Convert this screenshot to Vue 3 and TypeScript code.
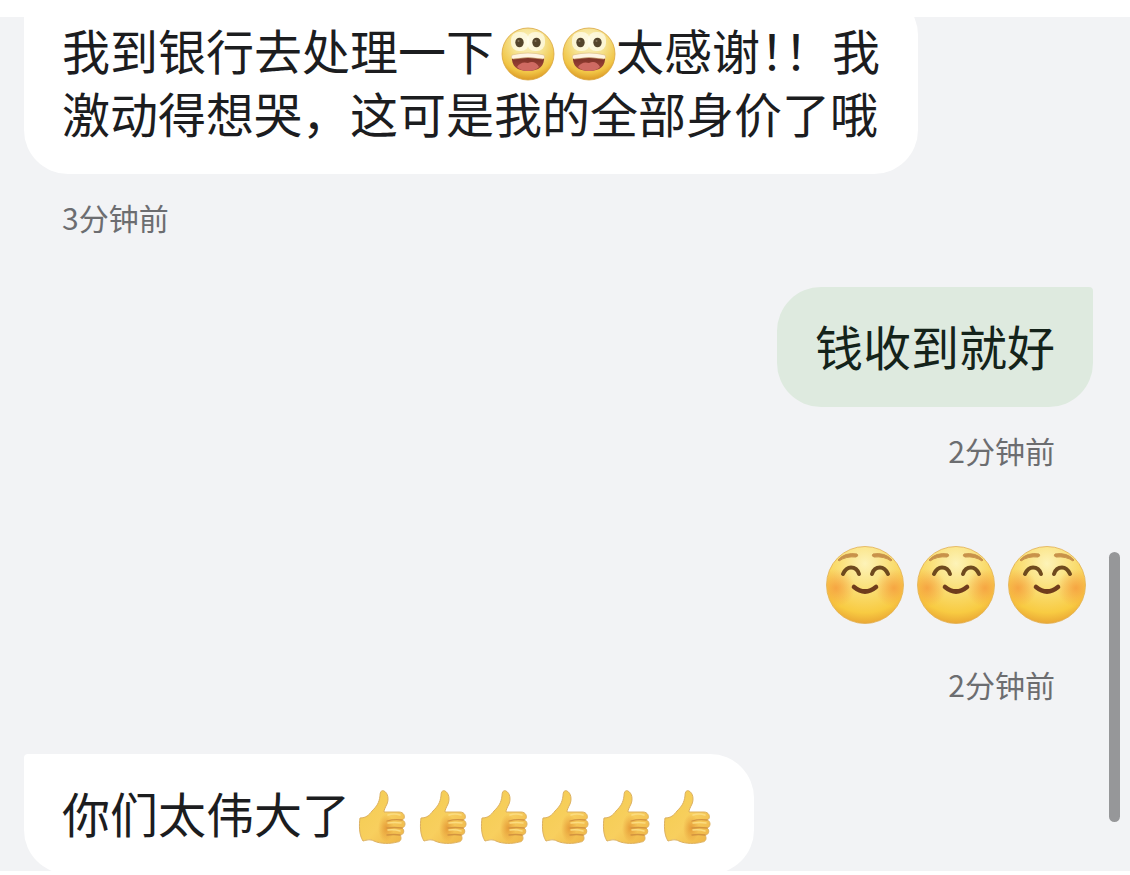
<script setup lang="ts">
type Emoji = 'grin' | 'smile' | 'thumb'
type Part = { text?: string; half?: string; emoji?: Emoji }
type Message = {
  id: number
  mine: boolean
  large?: boolean
  lines: Part[][]
  time?: string
}

const messages: Message[] = [
  {
    id: 1,
    mine: false,
    lines: [
      [
        { text: '我到银行去处理一下' },
        { emoji: 'grin' },
        { emoji: 'grin' },
        { text: '太感谢' },
        { half: '！' },
        { text: '！我' },
      ],
      [{ text: '激动得想哭，这可是我的全部身价了哦' }],
    ],
    time: '3分钟前',
  },
  { id: 2, mine: true, lines: [[{ text: '钱收到就好' }]], time: '2分钟前' },
  {
    id: 3,
    mine: true,
    large: true,
    lines: [[{ emoji: 'smile' }, { emoji: 'smile' }, { emoji: 'smile' }]],
    time: '2分钟前',
  },
  {
    id: 4,
    mine: false,
    lines: [
      [
        { text: '你们太伟大了' },
        ...Array.from({ length: 6 }, (): Part => ({ emoji: 'thumb' })),
      ],
    ],
  },
]
</script>

<template>
  <div class="page">
    <svg class="defs" aria-hidden="true">
      <defs>
        <radialGradient id="grin-face" cx="50%" cy="28%" r="72%">
          <stop offset="0" stop-color="#fbf3c8" />
          <stop offset="0.45" stop-color="#f5e08a" />
          <stop offset="0.8" stop-color="#f1c545" />
          <stop offset="1" stop-color="#dc9a26" />
        </radialGradient>
        <linearGradient id="grin-mouth" x1="0" y1="0" x2="0" y2="1">
          <stop offset="0" stop-color="#6e2a20" />
          <stop offset="1" stop-color="#a8483c" />
        </linearGradient>
        <radialGradient id="smile-face" cx="50%" cy="22%" r="80%">
          <stop offset="0" stop-color="#fdf3b8" />
          <stop offset="0.4" stop-color="#fae07a" />
          <stop offset="0.8" stop-color="#f8cb42" />
          <stop offset="1" stop-color="#e8a232" />
        </radialGradient>
        <radialGradient id="smile-cheek">
          <stop offset="0" stop-color="#f59a3c" stop-opacity="0.8" />
          <stop offset="1" stop-color="#f59a3c" stop-opacity="0" />
        </radialGradient>
        <clipPath id="smile-clip"><circle cx="39" cy="39" r="38" /></clipPath>
        <linearGradient id="thumb-skin" x1="0" y1="0" x2="1" y2="1">
          <stop offset="0" stop-color="#f3cc50" />
          <stop offset="0.55" stop-color="#f8cf5e" />
          <stop offset="1" stop-color="#eeb345" />
        </linearGradient>
        <radialGradient id="thumb-shade">
          <stop offset="0" stop-color="#e08c2c" stop-opacity="0.7" />
          <stop offset="1" stop-color="#e08c2c" stop-opacity="0" />
        </radialGradient>
      </defs>
    </svg>

    <main class="chat">
      <article
        v-for="m in messages"
        :key="m.id"
        class="message"
        :class="{ mine: m.mine }"
      >
        <div class="bubble" :class="{ large: m.large }">
          <p v-for="(line, i) in m.lines" :key="i" class="line">
            <template v-for="(part, j) in line" :key="j">
              <span v-if="part.text">{{ part.text }}</span>
              <span v-else-if="part.half" class="half">{{ part.half }}</span>
              <svg
                v-else-if="part.emoji === 'grin'"
                class="emoji"
                viewBox="-4 0 61 54"
                role="img"
                aria-label="大笑"
              >
                <circle cx="30" cy="27" r="26" fill="url(#grin-face)" stroke="#d9a640" stroke-width="0.8" />
                <rect x="13" y="5" width="18" height="19" rx="8" fill="#fffdf0" opacity="0.7" />
                <rect x="29" y="5" width="18" height="19" rx="8" fill="#fffdf0" opacity="0.7" />
                <ellipse cx="21.500" cy="15.500" rx="4.200" ry="4.800" fill="#54452c" />
                <ellipse cx="38.500" cy="15.500" rx="4.200" ry="4.800" fill="#54452c" />
                <circle cx="20.500" cy="14" r="1" fill="#84755a" />
                <circle cx="37.500" cy="14" r="1" fill="#84755a" />
                <path d="M14 29 Q30 25 46 29 C47 39 41 44 30 44 C19 44 13 39 14 29Z" fill="url(#grin-mouth)" />
                <path d="M19 40 Q23 34 30 36 Q37 33 41 40 Q37 44 30 44 Q23 44 19 40Z" fill="#cf6a62" />
                <path d="M14 28 Q30 24 46 28 Q48 31 45 32 Q30 29 15 32 Q12 31 14 28Z" fill="#fff4e2" stroke="#d9b880" stroke-width="0.6" />
              </svg>
              <svg
                v-else-if="part.emoji === 'smile'"
                class="emoji-large"
                viewBox="0 0 78 78"
                role="img"
                aria-label="微笑"
              >
                <circle cx="39" cy="39" r="38.500" fill="url(#smile-face)" stroke="#e2ae50" stroke-width="0.8" />
                <g clip-path="url(#smile-clip)">
                  <circle cx="10" cy="42" r="19" fill="url(#smile-cheek)" />
                  <circle cx="68" cy="42" r="19" fill="url(#smile-cheek)" />
                </g>
                <path d="M12 14 Q19 6 31 8 Q33 10 30 11 Q20 10 13 15Z" fill="#c8924a" stroke="#c8924a" stroke-linejoin="round" />
                <path d="M66 14 Q59 6 47 8 Q45 10 48 11 Q58 10 65 15Z" fill="#c8924a" stroke="#c8924a" stroke-linejoin="round" />
                <g fill="none" stroke="#6e4a1e" stroke-width="4" stroke-linecap="round">
                  <path d="M17 28 Q20 21.500 25 21.500 Q31 21.500 33 28" />
                  <path d="M46 28 Q48 21.500 54 21.500 Q59 21.500 62 28" />
                </g>
                <path d="M28 41 Q39 50 50 41" fill="none" stroke="#6f3c1c" stroke-width="4.600" stroke-linecap="round" />
              </svg>
              <svg
                v-else
                class="emoji"
                viewBox="-1 0 61 54"
                role="img"
                aria-label="点赞"
              >
                <path
                  d="M9 28 C15 28 18 25 21 21 C26 16 28 13 29 6 C29 1 31 0 33 1 C37 3 38 9 36 14 C34 18 33 20 33 22 L48 22 C54 22 55 29 51 30 C55 31 55 37 51 38 C54 40 53 45 49 45 C51 48 50 52 46 52 C40 54 29 54 23 51 C19 49 16 50 12 51 C8 45 8 35 9 28Z"
                  fill="url(#thumb-skin)"
                  stroke="#dcb060"
                  stroke-width="1"
                  stroke-linejoin="round"
                />
                <ellipse cx="35" cy="38" rx="8" ry="14" fill="url(#thumb-shade)" />
                <g fill="none" stroke="#d39440" stroke-width="1.300" stroke-linecap="round">
                  <path d="M36 31 Q43 29 51 30" />
                  <path d="M36 38 Q43 37 51 38" />
                  <path d="M36 45 Q43 44 49 45" />
                </g>
                <path d="M37 25 Q43 23 49 25 M37 33 Q44 32 50 33 M37 40 Q43 39 49 41" fill="none" stroke="#fbdc80" stroke-width="1.500" stroke-linecap="round" />
              </svg>
            </template>
          </p>
        </div>
        <time v-if="m.time" class="time">{{ m.time }}</time>
      </article>
      <div class="scrollbar"></div>
    </main>
  </div>
</template>

<style>
body {
  margin: 0;
  background: #ffffff;
}
</style>

<style scoped>
.page {
  box-sizing: border-box;
  display: flex;
  flex-direction: column;
  height: 100vh;
  padding: 17px 0 4px;
  overflow: hidden;
  font-family: "Noto Sans CJK SC", "Noto Sans", sans-serif;
}

.defs {
  position: absolute;
  width: 0;
  height: 0;
}

.chat {
  position: relative;
  box-sizing: border-box;
  display: flex;
  flex: 1;
  flex-direction: column;
  gap: 48px;
  min-height: 0;
  padding: 0 37px 0 24px;
  overflow: hidden;
  background: #f2f3f5;
}

.message {
  display: flex;
  flex: none;
  flex-direction: column;
  align-items: flex-start;
}

/* The list is scrolled, so the oldest bubble runs under the top edge. */
.message:first-child {
  margin-top: -26px;
}

.mine {
  align-items: flex-end;
}

.bubble {
  padding: 27px 38px 30px;
  border-radius: 4px 44px 44px 44px;
  background: #ffffff;
  color: #1c1d1f;
  font-size: 48px;
  line-height: 63px;
}

.mine .bubble {
  border-radius: 44px 4px 44px 44px;
  background: #deeadf;
  color: #14231a;
}

.mine .large {
  padding: 26px 0 17px;
  background: none;
}

.line {
  display: flex;
  align-items: center;
  margin: 0;
  white-space: nowrap;
}

.half {
  width: 24px;
}

.emoji {
  flex: none;
  width: 61px;
  height: 54px;
  margin-top: 8px;
}

.emoji-large {
  flex: none;
  width: 78px;
  height: 78px;
  margin: 0 7px 0 6px;
}

.time {
  margin: 21px 38px 0;
  color: #6c6d70;
  font-size: 30px;
  line-height: 44px;
}

.scrollbar {
  position: absolute;
  top: 535px;
  right: 10px;
  width: 11px;
  height: 270px;
  border-radius: 6px;
  background: #969799;
}
</style>
